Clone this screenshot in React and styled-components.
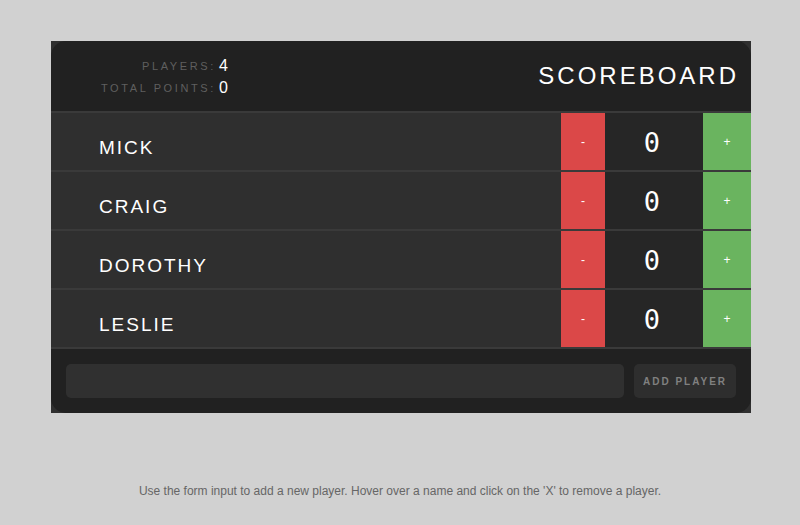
import React, { useState } from 'react';
import styled, { createGlobalStyle } from 'styled-components';

const GlobalStyle = createGlobalStyle`
  body {
    margin: 0;
    background: #d1d1d1;
    font-family: "Liberation Sans", Arial, sans-serif;
  }
`;

const Page = styled.div`
  padding-top: 41px;
  display: flex;
  flex-direction: column;
  align-items: center;
`;

const Board = styled.div`
  width: 700px;
  margin-left: 2px;
  background: #2f2f2f;
  display: flex;
  flex-direction: column;
`;

const Header = styled.div`
  height: 70px;
  background: #212121;
  border-radius: 15px 15px 0 0;
  display: flex;
  align-items: center;
  justify-content: space-between;
  padding: 0 12px 0 50px;
  border-bottom: 2px solid #3a3a3a;
`;

const Stats = styled.table`
  border-collapse: collapse;
  margin-top: 2px;

  td {
    padding: 0;
    height: 22px;
  }
`;

const StatLabel = styled.td`
  text-align: right;
  color: #5f5f5f;
  font-size: 11px;
  letter-spacing: 2.6px;
  && {
    padding-right: 3px;
  }
`;

const StatValue = styled.td`
  color: #fff;
  font-size: 16px;
  text-align: left;
`;

const Title = styled.h1`
  margin: 0;
  color: #fff;
  font-weight: 400;
  font-size: 24px;
  letter-spacing: 3px;
`;

const Row = styled.div`
  height: 57px;
  display: flex;
  border-bottom: 2px solid #3a3a3a;
  background: #2f2f2f;
`;

const Name = styled.div`
  flex: 1;
  display: flex;
  align-items: center;
  padding: 12px 0 0 48px;
  color: #fff;
  font-size: 19px;
  letter-spacing: 2px;
`;

const Counter = styled.div`
  display: flex;
  width: 190px;
`;

const CountButton = styled.button`
  width: ${(p) => p.$w}px;
  border: none;
  padding: 0;
  color: #fff;
  font-size: 12px;
  font-family: "Liberation Sans", Arial, sans-serif;
  background: ${(p) => (p.$plus ? '#6ab45f' : '#db4848')};
  cursor: pointer;
`;

const Score = styled.div`
  flex: 1;
  background: #262626;
  color: #fff;
  display: flex;
  align-items: center;
  justify-content: center;
  font-family: "DejaVu Sans Mono", monospace;
  font-size: 27px;
  padding-top: 1px;
  padding-right: 4px;
`;

const Footer = styled.form`
  background: #212121;
  border-radius: 0 0 15px 15px;
  padding: 15px;
  display: flex;
  gap: 10px;
`;

const Input = styled.input`
  flex: 1;
  height: 34px;
  box-sizing: border-box;
  border: none;
  border-radius: 5px;
  background: #303030;
  color: #fff;
  outline: none;
  padding: 0 10px;
`;

const AddButton = styled.button`
  width: 102px;
  height: 34px;
  border: none;
  border-radius: 5px;
  background: #2e2e2e;
  color: #808080;
  font-family: "Liberation Sans", Arial, sans-serif;
  font-weight: 700;
  font-size: 10px;
  letter-spacing: 2px;
  padding: 0;
`;

const Note = styled.p`
  margin: 71px 0 0;
  color: #666;
  font-size: 12px;
`;

const initialPlayers = [
  { name: 'MICK', score: 0 },
  { name: 'CRAIG', score: 0 },
  { name: 'DOROTHY', score: 0 },
  { name: 'LESLIE', score: 0 },
];

export default function App() {
  const [players, setPlayers] = useState(initialPlayers);

  const change = (i, d) =>
    setPlayers((ps) => ps.map((p, j) => (j === i ? { ...p, score: p.score + d } : p)));

  const total = players.reduce((s, p) => s + p.score, 0);

  return (
    <Page>
      <GlobalStyle />
      <Board>
        <Header>
          <Stats>
            <tbody>
              <tr>
                <StatLabel>PLAYERS:</StatLabel>
                <StatValue>{players.length}</StatValue>
              </tr>
              <tr>
                <StatLabel>TOTAL POINTS:</StatLabel>
                <StatValue>{total}</StatValue>
              </tr>
            </tbody>
          </Stats>
          <Title>SCOREBOARD</Title>
        </Header>
        {players.map((p, i) => (
          <Row key={p.name}>
            <Name>{p.name}</Name>
            <Counter>
              <CountButton $w={44} onClick={() => change(i, -1)}>-</CountButton>
              <Score>{p.score}</Score>
              <CountButton $w={48} $plus onClick={() => change(i, 1)}>+</CountButton>
            </Counter>
          </Row>
        ))}
        <Footer onSubmit={(e) => e.preventDefault()}>
          <Input type="text" />
          <AddButton type="submit">ADD PLAYER</AddButton>
        </Footer>
      </Board>
      <Note>Use the form input to add a new player. Hover over a name and click on the 'X' to remove a player.</Note>
    </Page>
  );
}
